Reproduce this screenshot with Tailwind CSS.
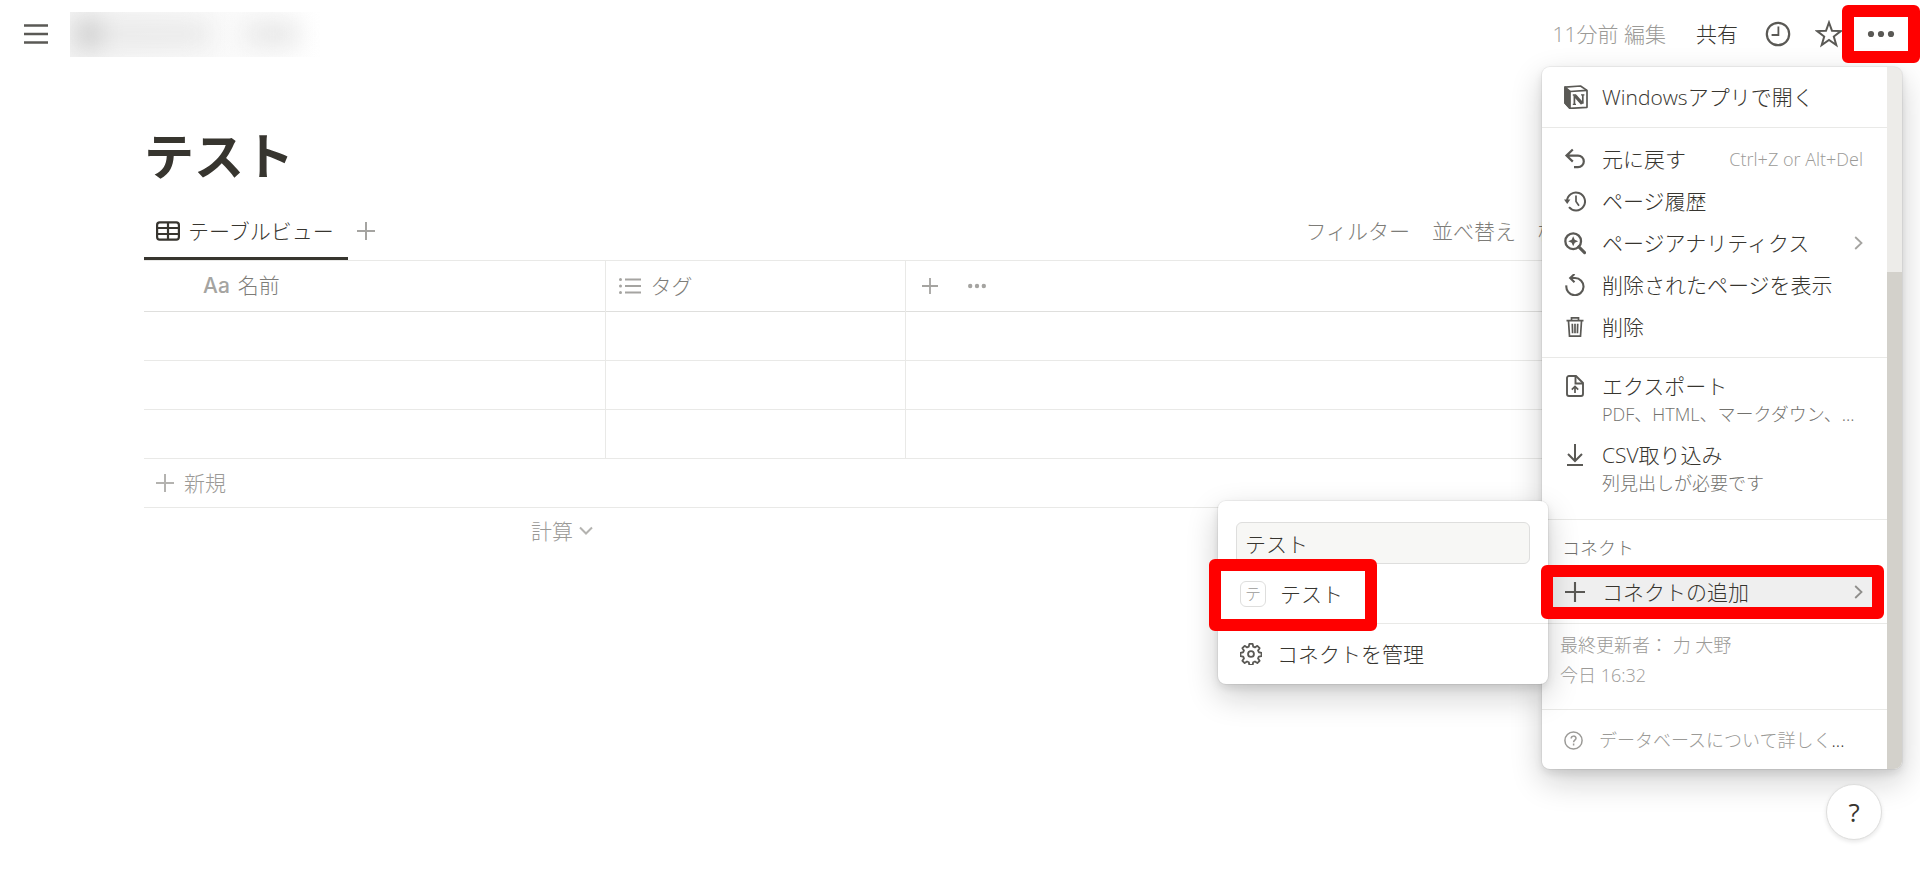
<!DOCTYPE html>
<html lang="ja">
<head>
  <meta charset="UTF-8" />
  <meta name="viewport" content="width=device-width, initial-scale=1.0" />
  <title>テスト</title>
  <script src="https://cdn.jsdelivr.net/npm/@tailwindcss/browser@4"></script>
  <style>
    body{font-family:'Open Sans','Noto Sans CJK JP',sans-serif}
  </style>
</head>

<body class="relative min-h-screen overflow-x-hidden bg-white text-[21px] leading-7 font-light text-[#37352f]">

  <!-- Top bar -->
  <header class="flex h-[68px] items-center pl-6">
    <button aria-label="メニュー" class="text-[#5a5955]">
      <svg class="h-6 w-6" viewBox="0 0 24 24" stroke="currentColor" stroke-width="2.4"><path d="M0 3.5h24M0 12h24M0 20.5h24"/></svg>
    </button>
    <!-- workspace name, blurred out -->
    <div class="ml-[22px] h-[45px] w-[250px] overflow-hidden bg-gradient-to-r from-[#f3f3f3] via-[#f9f9f9] to-white">
      <div class="flex h-full items-center pl-2 blur-md">
        <div class="h-7 w-5 bg-[#c2c2c2]"></div>
        <div class="h-6 w-28 bg-[#e8e8e8]"></div>
        <div class="ml-9 h-6 w-13 bg-[#e6e6e6]"></div>
      </div>
    </div>
    <div class="ml-auto flex items-center">
      <span class="mr-[30px] text-[#9b9a97]">11分前 編集</span>
      <button class="mr-[27px]">共有</button>
      <button aria-label="更新履歴" class="mr-6 text-[#5a5955]">
        <svg class="h-[26px] w-[26px]" viewBox="0 0 26 26" fill="none" stroke="currentColor" stroke-width="2.2"><circle cx="13" cy="13" r="11.2"/><path d="M13.4 5.6v8.4H6.6" stroke-width="1.8"/></svg>
      </button>
      <button aria-label="お気に入り" class="-mr-px text-[#5a5955]">
        <svg class="h-7 w-7" viewBox="0 0 28 28" fill="none" stroke="currentColor" stroke-width="2"><path d="M14 2.5l3 8.3 8.8.3-7 5.4 2.5 8.5-7.3-5-7.3 5 2.5-8.5-7-5.4 8.8-.3z"/></svg>
      </button>
      <button aria-label="その他" class="relative z-20 flex h-[58px] w-[78px] items-center justify-center text-[#5a5955]">
        <svg class="h-2 w-7" viewBox="0 0 28 8" fill="currentColor"><circle cx="4" cy="4" r="3.1"/><circle cx="14" cy="4" r="3.1"/><circle cx="24" cy="4" r="3.1"/></svg>
        <span class="absolute inset-0 rounded-md border-12 border-[#ff0000]"></span>
      </button>
    </div>
  </header>

  <main class="px-36">
    <h1 class="mt-[58px] text-[50px] leading-[60px] font-bold">テスト</h1>

    <!-- View tabs -->
    <div class="mt-[15px] flex h-[60px] items-center border-b border-[#e9e9e7]">
      <button class="flex h-[59px] w-[204px] items-center gap-2 border-b-3 border-[#37352f] pt-[3px] pl-3">
        <svg class="h-5 w-6" viewBox="0 0 24 20" fill="none" stroke="currentColor" stroke-width="2.2"><rect x="1.1" y="1.4" width="21.8" height="17.2" rx="2.6"/><path d="M1 7h22M1 13h22M12 1v18"/></svg>
        テーブルビュー
      </button>
      <button aria-label="ビューを追加" class="ml-[9px] text-[#a5a4a1]">
        <svg class="h-[18px] w-[18px]" viewBox="0 0 18 18" stroke="currentColor" stroke-width="2"><path d="M9 0v18M0 9h18"/></svg>
      </button>
      <div class="ml-auto flex gap-[22px] pr-[196px] text-[#7d7c78]">
        <button>フィルター</button>
        <button>並べ替え</button>
        <button>検索</button>
      </div>
    </div>

    <table class="w-full table-fixed border-collapse text-left">
      <colgroup><col class="w-[461px]" /><col class="w-[300px]" /><col /></colgroup>
      <thead>
        <tr class="h-[50px] border-b border-[#dfdfdd] text-[#7d7c78]">
          <th class="border-r border-[#e9e9e7] pl-[59px] font-light"><span class="mr-2 font-[Inter] font-medium text-[#a5a4a1]">Aa</span>名前</th>
          <th class="border-r border-[#e9e9e7] font-light">
            <span class="flex items-center gap-[10px] pl-[13px]">
              <svg class="h-4 w-[22px] text-[#a5a4a1]" viewBox="0 0 22 16" fill="currentColor"><path d="M6 0.5h16v2H6zM6 7h16v2H6zM6 13.5h16v2H6z"/><circle cx="1.5" cy="1.5" r="1.5"/><circle cx="1.5" cy="8" r="1.5"/><circle cx="1.5" cy="14.5" r="1.5"/></svg>
              タグ
            </span>
          </th>
          <th>
            <span class="flex items-center gap-[30px] pl-4 text-[#a5a4a1]">
              <button aria-label="列を追加"><svg class="h-4 w-4" viewBox="0 0 16 16" stroke="currentColor" stroke-width="1.8"><path d="M8 0v16M0 8h16"/></svg></button>
              <button aria-label="列の設定"><svg class="h-[6px] w-[18px]" viewBox="0 0 18 6" fill="currentColor"><circle cx="2.2" cy="3" r="2.2"/><circle cx="9" cy="3" r="2.2"/><circle cx="15.8" cy="3" r="2.2"/></svg></button>
            </span>
          </th>
        </tr>
      </thead>
      <tbody>
        <tr class="h-[49px] border-b border-[#e9e9e7]"><td class="border-r border-[#e9e9e7]"></td><td class="border-r border-[#e9e9e7]"></td><td></td></tr>
        <tr class="h-[49px] border-b border-[#e9e9e7]"><td class="border-r border-[#e9e9e7]"></td><td class="border-r border-[#e9e9e7]"></td><td></td></tr>
        <tr class="h-[49px] border-b border-[#e9e9e7]"><td class="border-r border-[#e9e9e7]"></td><td class="border-r border-[#e9e9e7]"></td><td></td></tr>
      </tbody>
    </table>
    <button class="flex h-[49px] w-full items-center gap-[10px] border-b border-[#e9e9e7] pl-3 text-[#9b9a97]">
      <svg class="h-[18px] w-[18px]" viewBox="0 0 18 18" stroke="#b4b3b0" stroke-width="2"><path d="M9 0v18M0 9h18"/></svg>
      新規
    </button>
    <div class="flex h-[46px] w-[449px] items-center justify-end">
      <button class="flex items-center gap-[6px] text-[#9b9a97]">
        計算
        <svg class="h-[9px] w-[14px]" viewBox="0 0 14 9" fill="none" stroke="#b4b3b0" stroke-width="2"><path d="M1 1.5l6 6 6-6"/></svg>
      </button>
    </div>
  </main>

  <!-- Page menu -->
  <div class="absolute top-[67px] right-[18px] flex w-[360px] rounded-lg bg-white shadow-[0_0_0_1px_rgba(15,15,15,0.05),0_4px_8px_rgba(15,15,15,0.1),0_12px_32px_rgba(15,15,15,0.2)]">
    <div class="flex-1 divide-y divide-[#e9e9e7]">
      <div class="py-[9px]">
        <button class="flex h-[42px] w-full items-center gap-4 pl-[22px]">
          <svg class="h-6 w-6 -mr-[2px] text-[#5a5955]" viewBox="0 0 24 24" fill="none" stroke="currentColor" stroke-width="1.7" stroke-linejoin="round"><path d="M1 2.2L16.5 1 23 5.4V22.3L6 23.4 1 18z"/><path d="M1 2.2L6 6.5V23.4L1 18z" fill="currentColor"/><path d="M6 6.5L23 5.4"/><path d="M10.4 19.2V10.2M18.8 9.8v9" stroke-width="1.7"/><path d="M11 10.6l7.2 8" stroke-width="3.2"/><path d="M8.8 10h3.2M17 9.8h3.4M8.8 19.4h3.2" stroke-width="1.3"/></svg>
          Windowsアプリで開く
        </button>
      </div>

      <div class="pt-[10px] pb-[9px]">
        <button class="flex h-[42px] w-full items-center gap-4 pr-6 pl-[22px]">
          <svg class="h-[22px] w-[22px] text-[#5a5955]" viewBox="0 0 22 22" fill="none" stroke="currentColor" stroke-width="2.2"><path d="M8.8 1.5L2.5 7.6l6.3 6M3 7.6h11a5.8 5.8 0 010 11.6H10"/></svg>
          元に戻す
          <span class="ml-auto text-[18px] text-[#9b9a97]">Ctrl+Z or Alt+Del</span>
        </button>
        <button class="flex h-[42px] w-full items-center gap-4 pl-[22px]">
          <svg class="h-[22px] w-[22px] text-[#5a5955]" viewBox="0 0 22 22" fill="none" stroke="currentColor" stroke-width="2"><path d="M3 11A9 9 0 1 1 5 17.2"/><path d="M12 5.5v6l3 4.2" stroke-width="1.7"/><path d="M0 9.5h6.4L3.2 14z" fill="currentColor" stroke="none"/></svg>
          ページ履歴
        </button>
        <button class="flex h-[42px] w-full items-center gap-4 pr-6 pl-[22px]">
          <svg class="h-6 w-[22px] text-[#5a5955]" viewBox="0 0 23 23" fill="none" stroke="currentColor" stroke-width="2.4"><circle cx="9.6" cy="9.6" r="8.2"/><path d="M15.5 15.5l6 6" stroke-width="3.2" stroke-linecap="round"/><path d="M9.6 4.4l1.6 3.6 3.6 1.6-3.6 1.6-1.6 3.6L8 11.2 4.4 9.6 8 8z" fill="currentColor" stroke="none"/></svg>
          ページアナリティクス
          <svg class="ml-auto h-[14px] w-[9px]" viewBox="0 0 9 14" fill="none" stroke="#a5a4a1" stroke-width="1.8"><path d="M1.2 1l6.3 6-6.3 6"/></svg>
        </button>
        <button class="flex h-[42px] w-full items-center gap-4 pl-[22px]">
          <svg class="h-[22px] w-[22px] text-[#5a5955]" viewBox="0 0 22 22" fill="none" stroke="currentColor" stroke-width="2.1"><path d="M2.4 11.4a8.6 8.6 0 1 0 8.6-7.4H6.5"/><path d="M10.5 0L6.2 4l4.3 4.2"/></svg>
          削除されたページを表示
        </button>
        <button class="flex h-[42px] w-full items-center gap-4 pl-[22px]">
          <svg class="h-[22px] w-[22px] text-[#5a5955]" viewBox="0 0 22 22" fill="none" stroke="currentColor" stroke-width="1.7"><path d="M2.5 4.6h17M7.5 4.4V1.8h7v2.6M4.5 5l1 15.2h11l1-15.2M8.3 7.8l.3 9.4M11 7.8v9.4M13.7 7.8l-.3 9.4"/></svg>
          削除
        </button>
      </div>

      <div class="pt-[9px] pb-[14px]">
        <button class="flex h-[69px] w-full gap-4 pt-[5px] pl-[22px] text-left">
          <svg class="mt-[3px] h-[22px] w-[22px] text-[#5a5955]" viewBox="0 0 22 22" fill="none" stroke="currentColor" stroke-width="1.9"><path d="M5 1h7l7 7v11a2 2 0 01-2 2H5a2 2 0 01-2-2V3a2 2 0 012-2z"/><path d="M11.5 1v7.5H19"/><path d="M11 18v-6M7.8 14.6L11 11.5l3.2 3.1" stroke-width="1.7"/></svg>
          <span>エクスポート<span class="block text-[18px] text-[#73726e]">PDF、HTML、マークダウン、...</span></span>
        </button>
        <button class="flex h-[69px] w-full gap-4 pt-[5px] pl-[22px] text-left">
          <svg class="mt-[3px] h-[22px] w-[22px] text-[#5a5955]" viewBox="0 0 22 22" fill="none" stroke="currentColor" stroke-width="2"><path d="M11 0v16.5M4 10l7 7 7-7M3 21h16"/></svg>
          <span>CSV取り込み<span class="block text-[18px] text-[#73726e]">列見出しが必要です</span></span>
        </button>
      </div>

      <div class="pt-[14px] pb-[10px]">
        <p class="mb-[9px] pl-5 text-[18px] text-[#73726e]">コネクト</p>
        <button class="relative flex h-[42px] w-full items-center gap-4 pr-6 pl-[22px]">
          <span class="absolute inset-y-1 right-2 left-2 bg-[#efefef]"></span>
          <svg class="relative h-5 w-[22px] text-[#5a5955]" viewBox="0 0 22 20" stroke="currentColor" stroke-width="2.1"><path d="M11 0v20M1 10h20"/></svg>
          <span class="relative">コネクトの追加</span>
          <svg class="relative ml-auto h-[14px] w-[9px]" viewBox="0 0 9 14" fill="none" stroke="#8f8e8b" stroke-width="1.8"><path d="M1.2 1l6.3 6-6.3 6"/></svg>
          <span class="absolute -inset-y-[6px] right-[3px] -left-px z-20 rounded-md border-12 border-[#ff0000]"></span>
        </button>
      </div>

      <div class="pt-[6px] pb-[19px] pl-[18px] text-[18px] leading-[30px] text-[#9b9a97]">
        <p>最終更新者： 力 大野</p>
        <p>今日 16:32</p>
      </div>

      <div class="pt-[9px] pb-2">
        <a href="#" class="flex h-[42px] items-center gap-4 pl-[22px] text-[18px] text-[#9b9a97]">
          <svg class="h-[19px] w-[19px]" viewBox="0 0 19 19" fill="none" stroke="currentColor" stroke-width="1.5"><circle cx="9.5" cy="9.5" r="8.6"/><path d="M7.2 7.4c0-3 4.8-3 4.8-.2 0 1.9-2.4 1.9-2.4 4M9.6 12.6v1.8"/></svg>
          <span>データベースについて詳しく<span class="text-[#37352f]">...</span></span>
        </a>
      </div>
    </div>

    <!-- scrollbar -->
    <div class="flex w-[15px] flex-col overflow-hidden rounded-r-lg bg-[#d3d1cb]">
      <div class="h-[205px] bg-[#edece9]"></div>
    </div>
  </div>

  <!-- Connection submenu -->
  <div class="absolute top-[501px] right-[372px] z-10 w-[330px] rounded-lg bg-white shadow-[0_0_0_1px_rgba(15,15,15,0.05),0_4px_8px_rgba(15,15,15,0.1),0_12px_32px_rgba(15,15,15,0.2)]">
    <div class="border-b border-[#e9e9e7] px-[18px] pt-[21px] pb-[8px]">
      <input type="text" value="テスト" aria-label="コネクトを検索" class="h-[42px] w-full rounded-md border border-[#dededd] bg-[#f7f7f5] px-2" />
      <button class="relative mt-[9px] flex h-[42px] w-full items-center gap-[14px] pl-1">
        <span class="flex h-[26px] w-[26px] items-center justify-center rounded-md border border-[#dededd] text-[16px] text-[#9b9a97]">テ</span>
        テスト
        <span class="absolute -top-[14px] -left-[27px] h-[72px] w-[168px] rounded-md border-12 border-[#ff0000]"></span>
      </button>
    </div>
    <button class="flex h-[60px] w-full items-center gap-[15px] pl-[22px]">
      <svg class="h-[22px] w-[22px] text-[#5a5955]" viewBox="0 0 24 24" fill="none" stroke="currentColor" stroke-width="2" stroke-linejoin="round"><circle cx="12" cy="12" r="3.2"/><path d="M10.2 1h3.6l.6 3 1.9.8 2.6-1.7 2.5 2.5-1.7 2.6.8 1.9 3 .6v3.6l-3 .6-.8 1.9 1.7 2.6-2.5 2.5-2.6-1.7-1.9.8-.6 3h-3.6l-.6-3-1.9-.8-2.6 1.7-2.5-2.5 1.7-2.6-.8-1.9-3-.6v-3.6l3-.6.8-1.9-1.7-2.6 2.5-2.5 2.6 1.7 1.9-.8z"/></svg>
      コネクトを管理
    </button>
  </div>

  <!-- Help -->
  <button aria-label="ヘルプ" class="absolute top-[784px] right-[38px] h-14 w-14 rounded-full border border-[#dededd] bg-white text-[26px] font-normal shadow-[0_2px_4px_rgba(15,15,15,0.1)]">?</button>
</body>
</html>
